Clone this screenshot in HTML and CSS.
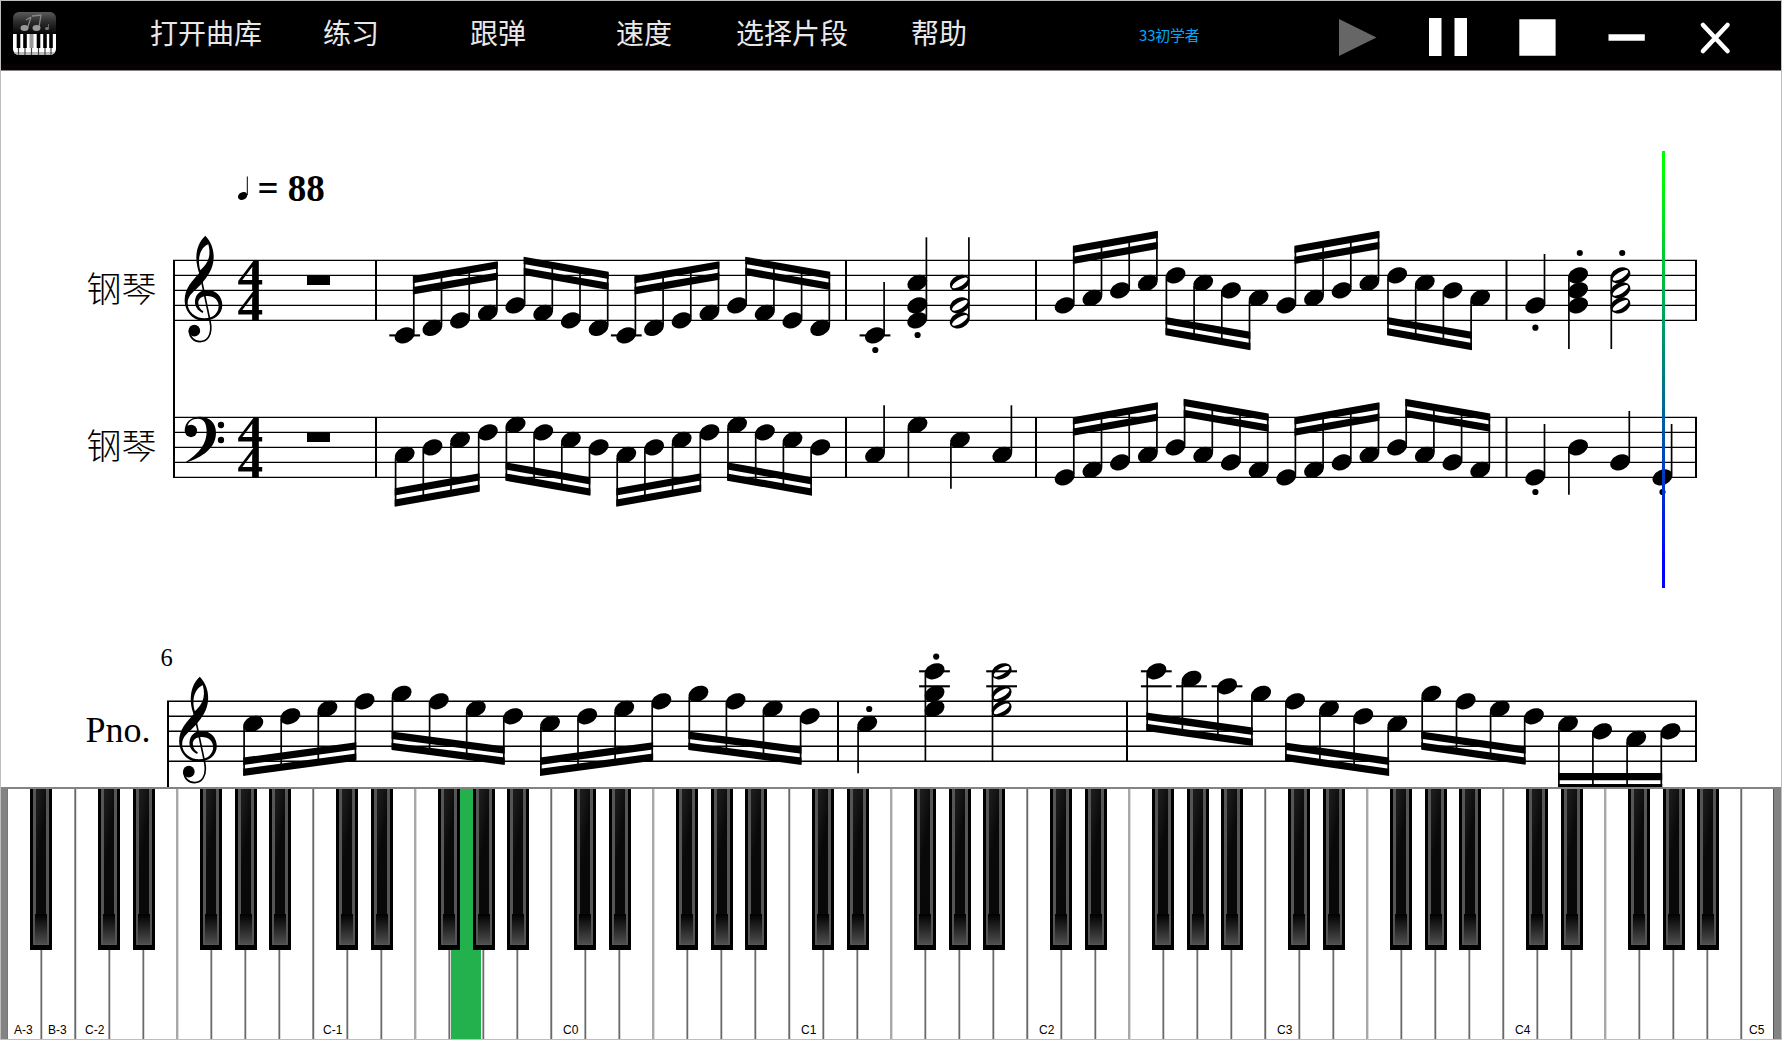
FILE: index.html
```html
<!DOCTYPE html>
<html lang="zh-CN">
<head>
  <meta charset="UTF-8">
  <title>钢琴</title>
  <link rel="stylesheet" href="styles.css">
</head>
<body>
  <div class="window">
    <header class="toolbar">
      <div class="logo">
        <svg width="43" height="43" viewBox="0 0 43 43">
          <defs>
            <linearGradient id="logoTop" x1="0" y1="0" x2="0" y2="1">
              <stop offset="0" stop-color="#5a5a5a"/>
              <stop offset="0.45" stop-color="#2c2c2c"/>
              <stop offset="1" stop-color="#050505"/>
            </linearGradient>
            <clipPath id="logoClip"><rect width="43" height="43" rx="6"/></clipPath>
          </defs>
          <g clip-path="url(#logoClip)">
            <rect width="43" height="22" fill="url(#logoTop)"/>
            <rect y="22" width="43" height="21" fill="#fff"/>
            <rect y="40" width="43" height="3" fill="#bbb"/>
            <path d="M5.500 22v14M12 22v14M25.500 22v14M32 22v14M38 22v14" stroke="#000" stroke-width="3.600"/>
            <path d="M5.500 36v7M12 36v7M18.500 36v7M25.500 36v7M32 36v7M38 36v7" stroke="#444" stroke-width="1.200"/>
            <path d="M18.500 22v14" stroke="#999" stroke-width="4"/>
            <path d="M14.500 16L18 5M18 5L13 8M26 15L28 3L19 4" stroke="#888" stroke-width="1.3" fill="none"/>
            <ellipse cx="11.500" cy="16" rx="4" ry="3" fill="#999"/>
            <ellipse cx="23.500" cy="16" rx="4" ry="3" fill="#999"/>
            <ellipse cx="34" cy="16.500" rx="2" ry="1.600" fill="#777"/>
            <path d="M35.500 16V12" stroke="#666"/>
          </g>
        </svg>
      </div>
      <nav class="menu">
        <a>打开曲库</a>
        <a>练习</a>
        <a>跟弹</a>
        <a>速度</a>
        <a>选择片段</a>
        <a>帮助</a>
      </nav>
      <div class="song">33初学者</div>
      <div class="controls">
        <svg class="play" viewBox="0 0 40 40"><path d="M1 1L38.500 19.500L1 38Z"/></svg>
        <svg viewBox="0 0 40 40"><path d="M1 0h12.500v38H1zM26.500 0h12.500v38H26.500z"/></svg>
        <svg viewBox="0 0 40 40"><path d="M1.300 1.300h36.300v36.500H1.300z"/></svg>
        <svg viewBox="0 0 40 40"><path d="M0.500 16.200h36.300v6.500H0.500z"/></svg>
        <svg viewBox="0 0 40 40"><path class="cross" d="M5 7L29.500 33M29.500 7L5 33"/></svg>
      </div>
    </header>

    <main class="sheet">
      <svg id="score" width="1780" height="716" viewBox="1 71 1780 716">
        <defs>
          <g id="gclef">
            <path fill-rule="evenodd" d="M398 459C382 452 374 438 375 424C376 404 390 390 412 390C440 390 457 411 457 436C457 464 432 482 402 482C366 482 344 452 344 420C344 384 368 362 388 339C376 312 371 258 406 227C424 246 432 270 431 294C430 328 412 350 394 372C374 394 353 404 353 430C353 456 376 475 404 475C430 475 446 458 446 438C446 420 432 408 412 408C396 408 385 416 385 428C385 440 391 448 400 454ZM415 253C396 260 379 288 391 331C412 312 425 290 415 253Z"/>
            <path d="M388 330L420 482C430 530 408 545 390 545C372 545 359 532 358 512" fill="none" stroke="#000" stroke-width="5"/>
            <circle cx="373" cy="512" r="17.500"/>
          </g>
          <g id="fclef">
            <path d="M344 813C344 786 364 770 389 770C420 770 438 790 438 818C438 862 400 892 343 909C390 880 410 850 410 814C410 788 400 776 384 776C366 776 354 786 352 802Z"/>
            <circle cx="363" cy="813" r="18.500"/>
            <circle cx="453" cy="795" r="9.500"/>
            <circle cx="453" cy="840" r="9.500"/>
          </g>
          <linearGradient id="cursorFill" x1="0" y1="0" x2="0" y2="1">
            <stop offset="0.05" stop-color="#0f0"/>
            <stop offset="0.95" stop-color="#00f"/>
          </linearGradient>
        </defs>
        <g id="notes"></g>

        <ellipse cx="242.600" cy="196" rx="4.900" ry="3.700" transform="rotate(-28 242.600 196)"/>
        <path d="M247.300 176.500V195" stroke="#000" stroke-width="1"/>
        <text class="tempo" x="257.500" y="201">= 88</text>
        <text class="part-cn" x="86.500" y="302">钢琴</text>
        <text class="part-cn" x="86.500" y="459">钢琴</text>
        <text class="part" x="85.500" y="742">Pno.</text>
        <text class="bar-no" x="160.500" y="666">6</text>

        <use href="#gclef" transform="translate(70 160) scale(0.3333)"/>
        <use href="#fclef" transform="translate(70 160) scale(0.3333)"/>
        <use href="#gclef" transform="translate(64.500 601) scale(0.3333)"/>
        <text class="time" transform="translate(237.500 290.200) scale(1.140 1)"><tspan x="0">4</tspan><tspan x="0" dy="30">4</tspan></text>
        <text class="time" transform="translate(237.500 447.200) scale(1.140 1)"><tspan x="0">4</tspan><tspan x="0" dy="30">4</tspan></text>
        <path d="M307 275.700h23v9.300h-23zM307 432.700h23v9.300h-23z"/>
        <rect x="1662" y="151" width="3" height="437" fill="url(#cursorFill)"/>
      </svg>
    </main>

    <footer class="piano">
      <div class="edge"></div>
      <div class="keys" id="keys"></div>
      <div class="edge"></div>
    </footer>
  </div>

  <script src="app.js"></script>
</body>
</html>
```
FILE: styles.css
```css
* { box-sizing: border-box; }
body { margin: 0; background: #fff; font-family: "Liberation Sans", "Noto Sans CJK SC", sans-serif; }
.window { width: 1782px; height: 1040px; border: 1px solid #c0bdbd; display: flex; flex-direction: column; overflow: hidden; }

.toolbar { height: 70px; flex: none; display: flex; background: linear-gradient(#000 63px, #080204 64px); border-bottom: 1px solid #848086; color: #fff; }
.logo { width: 149px; flex: none; padding: 11px 0 0 12px; }
.menu { display: grid; flex: none; grid-template-columns: 173px 147px 146px 120px 175px 228px; font-family: "Noto Sans CJK SC", sans-serif; font-weight: 400; font-size: 28px; line-height: 40px; padding-top: 11px; color: #e8e8e8; }
.menu a { white-space: nowrap; }
.song { width: 199px; flex: none; padding-top: 23px; font: 15px/22px "Noto Sans CJK SC", sans-serif; letter-spacing: -0.2px; color: #00a8f8; }
.controls { display: grid; flex: none; grid-template-columns: repeat(5, 90px); padding-top: 17px; }
.controls svg { width: 40px; height: 40px; fill: #fff; }
.controls .play { fill: #666; }
.controls .cross { stroke: #fff; stroke-width: 4.6; stroke-linecap: round; }

.sheet { height: 716px; flex: none; }
.sheet svg { display: block; }
.tempo { font: bold 37px "Liberation Serif", serif; }
.part-cn { font: 300 35px "Noto Sans CJK SC", sans-serif; }
.part { font: 36px "Liberation Serif", serif; }
.bar-no { font: 24.5px "Liberation Serif", serif; }
.time { font: bold 45px "Liberation Serif", serif; }
.staff-line { stroke: #000; stroke-width: 1.4; }
.bar-line { stroke: #000; stroke-width: 2; }
.stem { stroke: #000; stroke-width: 1.7; }
.ledger { stroke: #000; stroke-width: 2.1; }

.piano { flex: 1; display: flex; border-top: 2px solid #838383; background: #fff; }
.edge { flex: none; width: 7px; background: #838383; border-right: 1px solid #777; position: relative; z-index: 1; }
.edge:last-child { width: 8px; border-right: 0; border-left: 1px solid #555; margin-left: -2px; }
.keys { display: flex; flex: none; margin-left: -1px; }
.key { position: relative; width: 34px; height: 251px; background: #fff; font-size: 12px; border-left: 1px solid #6a6a6a; box-shadow: inset 1px 0 #dcdcdc, -1px 0 #aaa; }
.key:first-child { border-left: 0; box-shadow: none; }
.key.f { border-left-color: #a8a8a8; box-shadow: inset 1px 0 #dcdcdc, -1px 0 #a8a8a8; }
.key.c { box-shadow: inset 1px 0 #ddd, -1px 0 #999; }
.key.active::before { content: ""; position: absolute; left: 1px; top: 0; width: 30px; height: 100%; background: #22b14c; }
.key span { position: absolute; bottom: 2px; left: 6px; line-height: 16px; color: #000; }
.key:first-child span { left: 7px; }
.key.low span { left: 9px; }
.key.c.up span { left: 11px; }
.key.c.up:last-child span { left: 7px; }

/* sharps hang over the boundary of two white keys */
.sharp { position: absolute; z-index: 2; top: 0; width: 22px; height: 161px; background: #555; border: solid #000; border-width: 0 3px 5px; }
.sharp::before { content: ""; position: absolute; left: 3px; top: 0; width: 10px; height: 125px; background: linear-gradient(100deg, #1f1f1f, #161616 20%, #090909 45%, #080808); }
.sharp::after { content: ""; position: absolute; left: 2px; top: 125px; width: 12px; height: 30px; background: linear-gradient(#000, #4e4e4e); }
```
FILE: app.js
```js
const out = [];
const staffs = { treble: 320.4, bass: 477.4, lower: 761.3 };
const STEM = 9.1;

function line(cls, x1, y1, x2, y2) {
  out.push(`<line class="${cls}" x1="${x1}" y1="${y1}" x2="${x2}" y2="${y2}"/>`);
}

// n counts half spaces up from the bottom line
function yOf(staff, n) {
  return staffs[staff] - n * 7.5;
}

function head(staff, x, n, open) {
  const y = yOf(staff, n);
  out.push(`<ellipse cx="${x}" cy="${y}" rx="10.5" ry="7.5" transform="rotate(-25 ${x} ${y})"/>`);
  if (open) {
    out.push(`<ellipse cx="${x}" cy="${y}" rx="8.9" ry="3.2" fill="#fff" transform="rotate(-31 ${x} ${y})"/>`);
  }
  if (n <= -2) line("ledger", x - 15.4, yOf(staff, -2), x + 15.4, yOf(staff, -2));
  for (let l = 10; l <= n; l += 2) {
    line("ledger", x - 15.4, yOf(staff, l), x + 15.4, yOf(staff, l));
  }
}

// notes joined by two beams; y1 and y2 are the outer edge at both ends
function beam(staff, xs, ns, up, y1, y2) {
  const s = up ? 1 : -1;
  const first = xs[0] + s * STEM;
  const last = xs[xs.length - 1] + s * STEM;
  xs.forEach((x, i) => {
    head(staff, x, ns[i]);
    const sx = x + s * STEM;
    const edge = y1 + (y2 - y1) * (sx - first) / (last - first);
    line("stem", sx, yOf(staff, ns[i]) - s * 3, sx, edge + s);
  });
  const a = first - 0.9, b = last + 0.9;
  [0, 11.1].forEach(o => {
    const p = y1 + s * o, q = y2 + s * o;
    out.push(`<path d="M${a} ${p}L${b} ${q}V${q + s * 7.3}L${a} ${p + s * 7.3}Z"/>`);
  });
}

function run(staff, x, step, groups) {
  groups.forEach((g, i) => {
    const xs = [0, 1, 2, 3].map(k => x + (i * 4 + k) * step);
    beam(staff, xs, g[0], g[1], g[2], g[3]);
  });
}

function chord(staff, x, ns, up, end, open, dot) {
  ns.forEach(n => head(staff, x, n, open));
  const sx = x + (up ? STEM : -STEM);
  const start = up ? Math.min(...ns) : Math.max(...ns);
  line("stem", sx, yOf(staff, start) + (up ? -3 : 3), sx, end);
  if (dot) out.push(`<circle cx="${dot[0]}" cy="${dot[1]}" r="3.1"/>`);
}

// staves and bar lines
[["treble", 173], ["bass", 173], ["lower", 167]].forEach(([s, x]) => {
  for (let n = 0; n <= 8; n += 2) line("staff-line", x, yOf(s, n), 1697, yOf(s, n));
});
line("bar-line", 174, 260, 174, 478);
line("bar-line", 168, 701, 168, 787);
["treble", "bass"].forEach(s => {
  [376, 846, 1036, 1506.5, 1696].forEach(x => line("bar-line", x, yOf(s, 8), x, yOf(s, 0)));
});
[838, 1127, 1696].forEach(x => line("bar-line", x, 701, x, 761.5));

// treble
const rise = [[-2, -1, 0, 1], true, 276, 261.3];
const fall = [[2, 1, 0, -1], true, 256.7, 271.7];
run("treble", 404.7, 27.7, [rise, fall, rise, fall]);
chord("treble", 875, [-2], true, 282, false, [875.3, 350]);
chord("treble", 917.3, [5, 2, 0], true, 237.3, false, [917.6, 335]);
chord("treble", 959.8, [5, 2, 0], true, 237.3, true);
const rise2 = [[2, 3, 4, 5], true, 245.7, 230.7];
const fall2 = [[6, 5, 4, 3], false, 335.3, 350.2];
run("treble", 1064.7, 27.7, [rise2, fall2, rise2, fall2]);
chord("treble", 1535.4, [2], true, 254, false, [1535.4, 327.7]);
chord("treble", 1578, [6, 4, 2], false, 349, false, [1579.8, 253]);
chord("treble", 1620.4, [6, 4, 2], false, 349, true, [1622.2, 253]);

// bass
const bRise = [[3, 4, 5, 6], false, 506.7, 491.7];
const bFall = [[7, 6, 5, 4], false, 480.7, 495.7];
run("bass", 404.7, 27.7, [bRise, bFall, bRise, bFall]);
chord("bass", 875, [3], true, 405.3);
chord("bass", 917.5, [7], false, 477.7);
chord("bass", 960, [5], false, 488.7);
chord("bass", 1002.3, [3], true, 405.3);
const bRise2 = [[0, 1, 2, 3], true, 417.3, 402.3];
const bFall2 = [[4, 3, 2, 1], true, 398.7, 413.4];
run("bass", 1064.7, 27.7, [bRise2, bFall2, bRise2, bFall2]);
chord("bass", 1535.4, [0], true, 424, false, [1535.4, 492]);
chord("bass", 1578, [4], false, 494.7);
chord("bass", 1620.2, [2], true, 411);
chord("bass", 1662.5, [0], true, 424, false, [1662.5, 492]);

// second system
const lRise = [[5, 6, 7, 8], false, 776, 760.7];
const lFall = [[9, 8, 7, 6], false, 750, 764.9];
run("lower", 253.2, 37.1, [lRise, lFall, lRise, lFall]);
chord("lower", 867.2, [5], false, 773.3, false, [869.2, 709]);
chord("lower", 934.5, [12, 9, 7], false, 761.7, false, [936.2, 656.6]);
chord("lower", 1001.6, [12, 9, 7], false, 761.7, true);
beam("lower", [1156.3, 1191.5, 1227, 1261], [12, 11, 10, 9], false, 731, 746);
beam("lower", [1295, 1329, 1363.2, 1397.3], [8, 7, 6, 5], false, 761, 776);
beam("lower", [1431.3, 1465.6, 1499.7, 1533.8], [9, 8, 7, 6], false, 749.8, 764.8);
beam("lower", [1568, 1602, 1636.2, 1670.4], [5, 4, 3, 4], false, 791.3, 791.3);

document.getElementById("notes").innerHTML = out.join("");

// keyboard: 52 white keys, starting on A
const names = "ABCDEFG";
const sharpLeft = { C: 23, D: 24, F: 23, G: 24, A: 24 };
let keys = "";
let octave = -3;
for (let i = 0; i < 52; i++) {
  const name = names[i % 7];
  if (name === "C") octave++;
  const cls = ["key", name.toLowerCase()];
  if (i === 13) cls.push("active");
  if (name === "C") cls.push(octave < 0 ? "low" : "up");
  let inner = "";
  if (sharpLeft[name] && i < 51) inner += `<i class="sharp" style="left:${sharpLeft[name] - 1}px"></i>`;
  if (name === "C" || i < 2) inner += `<span>${name}${octave}</span>`;
  keys += `<div class="${cls.join(" ")}">${inner}</div>`;
}
document.getElementById("keys").innerHTML = keys;
```
